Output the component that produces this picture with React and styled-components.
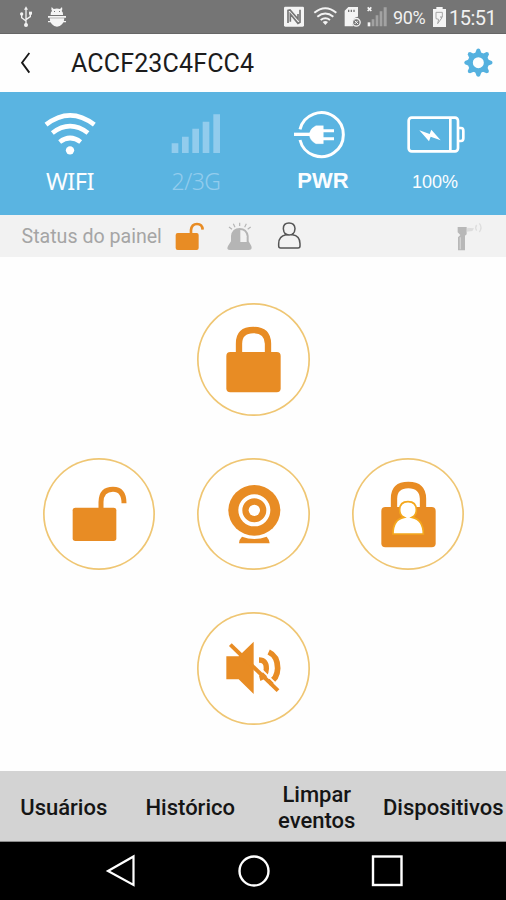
import React from "react";
import styled, { createGlobalStyle } from "styled-components";

const ORANGE = "#e88c24";

const Global = createGlobalStyle`
  * { box-sizing: border-box; }
  body { margin: 0; background: #fff; }
  svg { display: block; flex: none; }
`;

const Screen = styled.div`
  width: 506px;
  height: 900px;
  display: flex;
  flex-direction: column;
  overflow: hidden;
  background: #fefefe;
  font-family: Roboto, sans-serif;
`;

const SystemBar = styled.header`
  height: 34px;
  flex: none;
  display: flex;
  align-items: center;
  justify-content: space-between;
  background: #757575;
  border-bottom: 1px solid #666;
`;

const SystemGroup = styled.div`
  display: flex;
  align-items: center;
  gap: ${(p) => p.$gap || 0}px;
  padding-left: ${(p) => p.$inset || 0}px;
`;

const SystemText = styled.span`
  color: #f1f1f1;
  font-size: ${(p) => p.$size}px;
  line-height: 34px;
  letter-spacing: ${(p) => p.$spacing || 0}px;
  width: ${(p) => p.$width}px;
  margin-left: ${(p) => p.$gap}px;
  padding-top: 2px;
  white-space: nowrap;
`;

const TitleBar = styled.div`
  height: 57.5px;
  flex: none;
  display: flex;
  align-items: center;
  padding: 0 13px 0 19px;
`;

const Title = styled.h1`
  margin: 0 auto 0 38px;
  padding-top: 2px;
  font-size: 25px;
  font-weight: 400;
  letter-spacing: 0.15px;
  line-height: 55px;
  color: #1c1c1c;
`;

const IconButton = styled.button`
  border: 0;
  padding: 0;
  background: none;
`;

const Metrics = styled.section`
  height: 123px;
  flex: none;
  display: grid;
  grid-template-columns: 140px 112px 142px 82px;
  background: #5ab4e1;
`;

const Metric = styled.div`
  display: flex;
  flex-direction: column;
  align-items: center;
  padding-top: 18.5px;
`;

const MetricLabel = styled.span`
  margin-top: 6px;
  height: 30px;
  line-height: ${(p) => p.$line || 30}px;
  font-family: ${(p) => p.$font};
  font-size: ${(p) => p.$size}px;
  font-weight: ${(p) => p.$weight || 400};
  letter-spacing: ${(p) => p.$spacing || 0}px;
  color: ${(p) => p.$color || "#fbfdff"};
`;

const PanelStatus = styled.section`
  height: 42.5px;
  flex: none;
  display: flex;
  align-items: center;
  background: #f2f2f2;
  padding: 2px 20px 0 21.5px;
`;

const PanelLabel = styled.span`
  width: 152.5px;
  font-size: 19.6px;
  line-height: 40px;
  color: #a5a5a5;
  white-space: nowrap;
`;

const StatusIcons = styled.div`
  display: flex;
  gap: 18.5px;
  margin-right: auto;
`;

const Controls = styled.main`
  flex: 1;
  display: grid;
  grid-template-columns: repeat(3, 112.5px);
  grid-template-rows: repeat(3, 112.5px);
  grid-template-areas: ". arm ." "disarm camera home" ". mute .";
  gap: 42px;
  padding-left: 1px;
  place-content: center;
`;

const RoundButton = styled.button`
  grid-area: ${(p) => p.$area};
  border: 0;
  padding: 0;
  border-radius: 50%;
  background: #fff;
  box-shadow: inset 0 0 0 1.7px #efc673;
`;

const Tabs = styled.nav`
  height: 71px;
  flex: none;
  display: grid;
  grid-template-columns: repeat(4, 126.5px);
  background: #d3d3d3;
  border-bottom: 1px solid #8a8a8a;
`;

const Tab = styled.button`
  border: 0;
  padding: 3px 0 0 1px;
  background: none;
  display: flex;
  align-items: center;
  justify-content: center;
  font: 500 22px/26px Roboto, sans-serif;
  color: #151515;
  text-align: center;
  white-space: pre-line;
`;

const NavBar = styled.footer`
  height: 58px;
  flex: none;
  display: flex;
  align-items: center;
  justify-content: center;
  gap: 101px;
  padding-left: 2px;
  background: #000;
`;

/* Icon viewBoxes share a drawing grid of three units per pixel. */
const Usb = () => (
  <svg width="16" height="24" viewBox="54 16 48 72" fill="none" stroke="#f2f2f2" strokeWidth="4">
    <path d="M78 28V74M65 45v9l13 10M91 42v9L78 60" />
    <path d="M78 20l-6 10h12z" fill="#f2f2f2" stroke="none" />
    <circle cx="78" cy="76" r="6" fill="#f2f2f2" stroke="none" />
    <circle cx="65" cy="43" r="5" fill="#f2f2f2" stroke="none" />
    <path d="M87 36h9v9h-9z" fill="#f2f2f2" stroke="none" />
  </svg>
);

const Debug = () => (
  <svg width="20" height="24" viewBox="141 16 60 72" fill="#f5f5f5">
    <path d="M155 22l6 6q10-3 19 0l6-6 1 7-2 5q4 3 4 9v3h-37v-3q0-6 4-9l-2-5zM144 49h54v5h-54zM149 56h44q0 11-7 18-6 7-15 7t-15-7q-7-7-7-18zM144 64h54v4h-54z" />
    <path d="M162 34h3v3h-3zM177 34h3v3h-3z" fill="#757575" />
  </svg>
);

const SystemIcons = () => (
  <svg width="106" height="26" viewBox="90 14 318 78" fill="#f4f4f4">
    <path d="M97 22h52q4 0 4 4v52q0 4-4 4H97q-4 0-4-4V26q0-4 4-4z" />
    <path d="M105 71V33l6-1 24 27V44M141 31v38l-6 3-23-28v23" stroke="#757575" strokeWidth="5" fill="none" />
    <g fill="none" stroke="#f4f4f4" strokeWidth="6">
      <path d="M184 40q33-27 66 0M193 52q24-19 48 0M203 62q14-10 28 0" />
    </g>
    <path d="M209 68q8-6 16 0l-8 9z" />
    <path d="M286 23h29v29a19 19 0 0 0-14 29h-26V34z" />
    <path d="M285 31h4v7h-4zM293 31h4v7h-4zM301 31h4v7h-4z" fill="#757575" />
    <circle cx="310" cy="69" r="11.5" fill="none" stroke="#f4f4f4" strokeWidth="4" />
    <path d="M305 64l10 10m0-10l-10 10" stroke="#f4f4f4" strokeWidth="3" />
    <path d="M344 24l11 11m0-11l-11 11" stroke="#f4f4f4" strokeWidth="5" />
    <path d="M344 69h8v12h-8z" />
    <path d="M356 60h8v21h-8zM368 48h8v33h-8zM380 36h8v45h-8zM392 24h9v57h-9z" fill="#a2a2a2" />
  </svg>
);

const SmallBattery = () => (
  <svg width="16" height="26" viewBox="534 14 48 78">
    <path d="M540 29h10v-6h19v6h10v54h-39z" fill="#f4f4f4" />
    <path d="M549 39h19v14h-6l5 2-13 18 3-13-8-2z" fill="none" stroke="#a5a5a5" strokeWidth="3" />
  </svg>
);

const Back = () => (
  <svg width="14" height="26" viewBox="57 148 42 78" fill="none" stroke="#181818" strokeWidth="5.5">
    <path d="M88 157L66 186L88 216" />
  </svg>
);

const Gear = () => (
  <svg width="30" height="30" viewBox="-46 -44 90 90" fill="#55b1df">
    {[0, 45, 90, 135, 180, 225, 270, 315].map((a) => (
      <path key={a} transform={`rotate(${a})`} d="M-10-27L-5-40q5-5 10 0L10-27z" />
    ))}
    <circle r="24" fill="none" stroke="#55b1df" strokeWidth="15" />
  </svg>
);

const Wifi = () => (
  <svg width="56" height="50" viewBox="126 60 168 150" fill="none" stroke="#fff">
    <path d="M138 104Q210 48 283 104" strokeWidth="14" />
    <path d="M157 129Q210 88 264 129" strokeWidth="14" />
    <path d="M179 156Q210 132 242 156" strokeWidth="14" />
    <circle cx="210" cy="181" r="12.5" fill="#fff" stroke="none" />
  </svg>
);

const Signal = () => (
  <svg width="52" height="50" viewBox="511 60 156 150" fill="#92cced">
    <path d="M516 160h20v29h-20zM547 140h20v49h-20zM578 116h20v73h-20zM609 95h20v94h-20zM641 73h20v116h-20z" />
  </svg>
);

const Plug = () => (
  <svg width="60" height="50" viewBox="120 60 180 150" fill="none" stroke="#fff">
    <path d="M141 118A66 66 0 1 1 141 150" strokeWidth="9" />
    <path d="M123 133h50" strokeWidth="10" />
    <path d="M169 133q2-16 15-23l5-3h22v54h-22l-5-3q-14-8-15-25z" fill="#fff" strokeWidth="1" />
    <path d="M208 122h35M208 146h35" strokeWidth="9" />
  </svg>
);

const Battery = () => (
  <svg width="60" height="50" viewBox="458 60 180 150" fill="none" stroke="#fff" strokeWidth="8">
    <rect x="469" y="83" width="148" height="101" rx="9" />
    <path d="M594 84v99" />
    <path d="M617 114h9q7 0 7 8v23q0 8-7 8h-9" />
    <path d="M501 121l31 11 5-13 28 32-30-11-5 14z" fill="#fff" stroke="none" />
  </svg>
);

const MiniUnlock = () => (
  <svg width="32" height="34" viewBox="525 390 96 102">
    <rect x="530" y="429" width="69" height="51" rx="6" fill={ORANGE} />
    <path d="M576 430v-10q2-18 18-18t17 17" fill="none" stroke={ORANGE} strokeWidth="8" />
  </svg>
);

const Siren = () => (
  <svg width="32" height="34" viewBox="675 390 96 102">
    <path d="M693 454v-16q3-24 26-24t27 24v16l8 14q4 12-8 12h-56q-12 0-6-12z" fill="#b5b5b5" />
    <path d="M721 420q17 1 19 19v17h-19z" fill="#f2f2f2" />
    <path d="M719 398v10M700 401l5 11M739 401l-5 11M687 411l9 7M752 411l-9 7" stroke="#b5b5b5" strokeWidth="3.5" />
  </svg>
);

const Person = () => (
  <svg width="28" height="34" viewBox="66 390 84 102" fill="none" stroke="#555" strokeWidth="4.5">
    <path d="M99 434q-8-7-8-18 0-17 17-17t18 17q0 11-8 18 23 3 23 27v7q0 6-6 6H83q-6 0-6-6v-7q0-23 22-27z" />
    <path d="M95 430q13 10 27 0" />
  </svg>
);

const Sensor = () => (
  <svg width="32" height="34" viewBox="606 390 96 102">
    <path d="M617 411h27v22l-5 4v44h-21v-39l7-7-8-8z" fill="#b8b8b8" />
    <path d="M625 442v36" stroke="#d2d2d2" strokeWidth="4" />
    <path d="M646 413l20 2-5 8-17 2z" fill="#ddd" />
    <path d="M674 405q-6 8 0 17M682 400q10 12 0 26" fill="none" stroke="#dedede" strokeWidth="4" />
  </svg>
);

const ControlSvg = ({ children }) => (
  <svg width="112.5" height="112.5" viewBox="22 24 337.5 337.5" fill={ORANGE}>
    {children}
  </svg>
);

const LockBody = () => (
  <>
    <rect x="110" y="171" width="163" height="121" rx="12" />
    <path d="M148 178v-32q0-41 43-41t44 41v32" fill="none" stroke={ORANGE} strokeWidth="19" />
  </>
);

const Lock = () => <ControlSvg><LockBody /></ControlSvg>;

const Unlock = () => (
  <ControlSvg>
    <rect x="111" y="173" width="131" height="100" rx="8" />
    <path d="M196 178v-22q1-38 36-38 33 0 33 42" fill="none" stroke={ORANGE} strokeWidth="15" />
  </ControlSvg>
);

const Camera = () => (
  <ControlSvg>
    <ellipse cx="194" cy="181" rx="78" ry="76" />
    <circle cx="194" cy="181" r="42" fill="none" stroke="#fff" strokeWidth="12" />
    <circle cx="194" cy="181" r="17" fill="#fff" />
    <path d="M157 260q37 14 74 0 7 7 9 20h-92q1-13 9-20z" />
  </ControlSvg>
);

const HomeLock = () => (
  <ControlSvg>
    <LockBody />
    <path
      d="M178 202q-13-6-13-22 0-25 25-25t25 25q0 16-13 22 34 7 34 50h-91q0-44 33-50z"
      fill="#fff" stroke="#f4a81d" strokeWidth="5"
    />
  </ControlSvg>
);

const Mute = () => (
  <ControlSvg>
    <path d="M110 157h37l45-44v157l-45-44h-37z" />
    <g fill="none" stroke={ORANGE}>
      <path d="M208 168q23 0 22 26-1 24-20 29" strokeWidth="16" />
      <path d="M237 144q27 12 27 49-1 33-27 43" strokeWidth="17" />
      <path d="M197 178l76 76" stroke="#fff" strokeWidth="6" />
      <path d="M122 122l143 138" strokeWidth="12" />
    </g>
  </ControlSvg>
);

export default function App() {
  return (
    <Screen>
      <Global />
      <SystemBar>
        <SystemGroup $inset={18} $gap={13}>
          <Usb />
          <Debug />
        </SystemGroup>
        <SystemGroup>
          <SystemIcons />
          <SystemText $size={18} $width={38} $gap={4} $spacing={-0.4}>90%</SystemText>
          <SmallBattery />
          <SystemText $size={20} $width={57} $gap={2} $spacing={-0.5}>15:51</SystemText>
        </SystemGroup>
      </SystemBar>
      <TitleBar>
        <IconButton aria-label="Voltar"><Back /></IconButton>
        <Title>ACCF23C4FCC4</Title>
        <IconButton aria-label="Ajustes"><Gear /></IconButton>
      </TitleBar>
      <Metrics>
        <Metric>
          <Wifi />
          <MetricLabel $font='"Noto Sans", sans-serif' $size={23.5} $spacing={-0.5}>WIFI</MetricLabel>
        </Metric>
        <Metric>
          <Signal />
          <MetricLabel $font='"Noto Sans", sans-serif' $size={23} $weight={300} $spacing={-0.5} $color="#92cced">2/3G</MetricLabel>
        </Metric>
        <Metric>
          <Plug />
          <MetricLabel $font='"Liberation Sans", sans-serif' $size={22} $weight={700}>PWR</MetricLabel>
        </Metric>
        <Metric>
          <Battery />
          <MetricLabel $font='"Liberation Sans", sans-serif' $size={18} $line={33}>100%</MetricLabel>
        </Metric>
      </Metrics>
      <PanelStatus>
        <PanelLabel>Status do painel</PanelLabel>
        <StatusIcons>
          <MiniUnlock />
          <Siren />
          <Person />
        </StatusIcons>
        <Sensor />
      </PanelStatus>
      <Controls>
        <RoundButton $area="arm" aria-label="Armar"><Lock /></RoundButton>
        <RoundButton $area="disarm" aria-label="Desarmar"><Unlock /></RoundButton>
        <RoundButton $area="camera" aria-label="Câmera"><Camera /></RoundButton>
        <RoundButton $area="home" aria-label="Armar em casa"><HomeLock /></RoundButton>
        <RoundButton $area="mute" aria-label="Silenciar"><Mute /></RoundButton>
      </Controls>
      <Tabs>
        <Tab>Usuários</Tab>
        <Tab>Histórico</Tab>
        <Tab>{"Limpar\neventos"}</Tab>
        <Tab>Dispositivos</Tab>
      </Tabs>
      <NavBar>
        <svg width="32" height="34" viewBox="0 0 32 34" fill="none" stroke="#fff" strokeWidth="2.2">
          <path d="M3 17L28.5 2.5V31z" />
        </svg>
        <svg width="32" height="34" viewBox="0 0 32 34" fill="none" stroke="#fff" strokeWidth="2.4">
          <circle cx="16" cy="17" r="14.5" />
        </svg>
        <svg width="32" height="34" viewBox="0 0 32 34" fill="none" stroke="#fff" strokeWidth="2.4">
          <rect x="2" y="2.5" width="28.5" height="28.5" />
        </svg>
      </NavBar>
    </Screen>
  );
}
